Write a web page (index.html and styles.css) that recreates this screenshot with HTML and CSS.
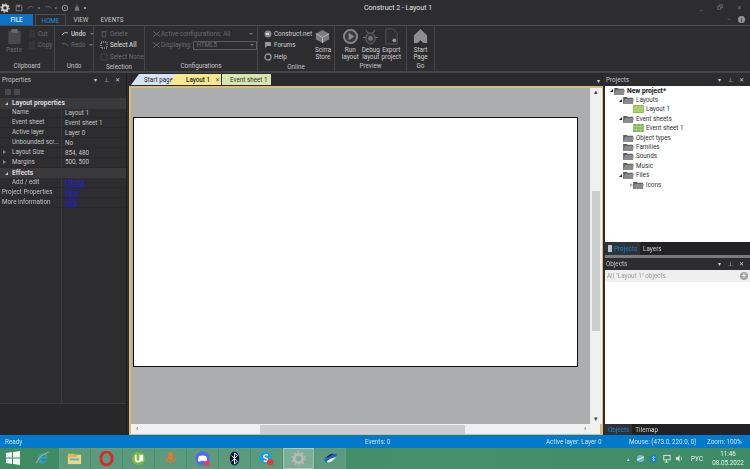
FILE: index.html
```html
<!DOCTYPE html>
<html lang="en">
<head>
<meta charset="utf-8">
<title>Construct 2 - Layout 1</title>
<link rel="stylesheet" href="styles.css">
</head>
<body>
<div class="app">
  <header class="titlebar">
    <div class="qat">
      <svg class="gear" viewBox="0 0 12 12"><circle cx="6" cy="6" r="3.2" fill="none" stroke="#cfcfcf" stroke-width="2.4"/><circle cx="6" cy="6" r="5" fill="none" stroke="#cfcfcf" stroke-width="1.4" stroke-dasharray="1.6 2.3"/></svg>
      <svg class="qi" viewBox="0 0 10 10"><path d="M1.5 1.5h6l1 1v6h-7z" fill="none" stroke="#8a8a8a"/><rect x="3" y="1.5" width="3" height="2.5" fill="#8a8a8a"/></svg>
      <svg class="qi" viewBox="0 0 10 10"><path d="M1 6c1-3 4-3.500 7-2" fill="none" stroke="#666" stroke-width="1.200"/></svg>
      <span class="qdot"></span>
      <svg class="qi" viewBox="0 0 10 10"><path d="M9 6C8 3 5 2.500 2 4" fill="none" stroke="#666" stroke-width="1.200"/></svg>
      <span class="qdot"></span>
      <svg class="qi" viewBox="0 0 10 10"><circle cx="5" cy="5" r="3.500" fill="none" stroke="#999" stroke-width="1.200"/><path d="M4 3.500l3 1.500-3 1.500z" fill="#777"/></svg>
      <svg class="qi" viewBox="0 0 10 10"><path d="M3 3.500h4l1 5H2z" fill="#777"/><path d="M5 1v3" stroke="#999"/></svg>
      <span class="qdot light"></span>
    </div>
    <div class="wintitle">Construct 2 - Layout 1</div>
    <div class="winbtns">
      <span class="wb">_</span>
      <svg class="wbi" viewBox="0 0 8 8"><path d="M1 3h4v4H1zM3 3V1h4v4H5" fill="none" stroke="#777"/></svg>
      <span class="wb">✕</span>
    </div>
  </header>
  <nav class="tabstrip">
    <span class="rtab file">FILE</span>
    <span class="rtab active">HOME</span>
    <span class="rtab rview">VIEW</span>
    <span class="rtab revents">EVENTS</span>
    <span class="spacer"></span>
    <span class="help-arrow">⌄</span>
    <span class="help-i">i</span>
  </nav>
  <section class="ribbon">
    <div class="group g-clip">
      <div class="gbody">
        <div class="big dim">
          <svg viewBox="0 0 16 18"><rect x="1.500" y="3" width="13" height="14" rx="1" fill="#4a4a4c"/><rect x="4.500" y="1" width="7" height="4" rx="1" fill="#6a6a6c"/></svg>
          <span>Paste</span>
        </div>
        <div class="col">
          <div class="ri dim"><i class="sq"></i>Cut</div>
          <div class="ri dim"><i class="sq"></i>Copy</div>
        </div>
      </div>
      <div class="glabel">Clipboard</div>
    </div>
    <div class="group g-undo">
      <div class="gbody">
        <div class="col">
          <div class="ri strong"><svg class="ic" viewBox="0 0 8 8"><path d="M1 5c1-2 3-3 6-2" fill="none" stroke="#bbb"/></svg>Undo<i class="caret"></i></div>
          <div class="ri dim"><svg class="ic" viewBox="0 0 8 8"><path d="M7 5C6 3 4 2 1 3" fill="none" stroke="#666"/></svg>Redo<i class="caret"></i></div>
        </div>
      </div>
      <div class="glabel">Undo</div>
    </div>
    <div class="group g-sel">
      <div class="gbody">
        <div class="col">
          <div class="ri dim"><svg class="ic" viewBox="0 0 8 8"><path d="M2 2h4l-.5 5h-3zM1.500 1.500h5" fill="none" stroke="#555"/></svg>Delete</div>
          <div class="ri strong"><svg class="ic" viewBox="0 0 8 8"><path d="M1 1h6v6H1z" fill="none" stroke="#ccc" stroke-dasharray="1 1"/></svg>Select All</div>
          <div class="ri dim"><svg class="ic" viewBox="0 0 8 8"><path d="M1 1h6v6H1z" fill="none" stroke="#444"/></svg>Select None</div>
        </div>
      </div>
      <div class="glabel">Selection</div>
    </div>
    <div class="group g-conf">
      <div class="gbody">
        <div class="col">
          <div class="ri dim"><svg class="ic wide" viewBox="0 0 10 8"><path d="M1 1l8 6M9 1L1 7" stroke="#666"/></svg>Active configurations: All<i class="caret push"></i></div>
          <div class="ri dim"><svg class="ic wide" viewBox="0 0 10 8"><path d="M1 1l8 6M9 1L1 7" stroke="#666"/></svg>Displaying:<span class="combo">HTML5<i class="caret"></i></span></div>
        </div>
      </div>
      <div class="glabel">Configurations</div>
    </div>
    <div class="group g-online">
      <div class="gbody">
        <div class="col">
          <div class="ri on"><svg class="ic" viewBox="0 0 8 8"><circle cx="4" cy="4" r="3.500" fill="#888"/><path d="M2 3h3v2H2z" fill="#ddd"/></svg>Construct.net</div>
          <div class="ri on"><svg class="ic" viewBox="0 0 8 8"><path d="M1 1h6v4H3L1 7z" fill="#999"/></svg>Forums</div>
          <div class="ri on"><svg class="ic" viewBox="0 0 8 8"><circle cx="4" cy="4" r="3" fill="none" stroke="#999" stroke-width="1.300"/></svg>Help</div>
        </div>
        <div class="big store">
          <svg viewBox="0 0 18 18"><path d="M2 6l7-4 7 4v6l-7 4-7-4z" fill="#7d7d7f"/><path d="M2 6l7 4 7-4M9 10v6" fill="none" stroke="#bbb"/></svg>
          <span>Scirra<br>Store</span>
        </div>
      </div>
      <div class="glabel">Online</div>
    </div>
    <div class="group g-prev">
      <div class="gbody spread">
        <div class="big">
          <svg viewBox="0 0 18 18"><circle cx="9" cy="9" r="7" fill="#3c3c3e" stroke="#888" stroke-width="2"/><path d="M7 5l6 4-6 4z" fill="#8d8d8f"/></svg>
          <span>Run<br>layout</span>
        </div>
        <div class="big">
          <svg viewBox="0 0 18 18"><ellipse cx="9" cy="11" rx="5" ry="6" fill="#3a3a3c" stroke="#666"/><circle cx="9" cy="11" r="2.500" fill="#777"/><path d="M4 2l3 4M14 2l-3 4M1 10h3M14 10h3" stroke="#777"/></svg>
          <span>Debug<br>layout</span>
        </div>
        <div class="big">
          <svg viewBox="0 0 18 18"><path d="M3 1h8l4 4v12H3z" fill="#2f2f31" stroke="#555"/><circle cx="12" cy="13" r="2" fill="#999"/></svg>
          <span>Export<br>project</span>
        </div>
      </div>
      <div class="glabel">Preview</div>
    </div>
    <div class="group g-go">
      <div class="gbody">
        <div class="big">
          <svg viewBox="0 0 18 18"><path d="M9 1l7 7v8h-4l-3-3-3 3H2V8z" fill="#8e8e90"/></svg>
          <span>Start<br>Page</span>
        </div>
      </div>
      <div class="glabel">Go</div>
    </div>
  </section>

  <main class="work">
    <aside class="left">
      <div class="phead"><span>Properties</span><span class="pctl">▾ <b>⊥</b> ✕</span></div>
      <div class="ptools"><i></i><i></i></div>
      <div class="props">
        <div class="cat"><i class="tri-open"></i>Layout properties</div>
        <div class="row"><span class="k">Name</span><span class="v">Layout 1</span></div>
        <div class="row"><span class="k">Event sheet</span><span class="v">Event sheet 1</span></div>
        <div class="row"><span class="k">Active layer</span><span class="v">Layer 0</span></div>
        <div class="row"><span class="k">Unbounded scr...</span><span class="v">No</span></div>
        <div class="row"><span class="k exp">Layout Size</span><span class="v">854, 480</span></div>
        <div class="row"><span class="k exp">Margins</span><span class="v">500, 500</span></div>
        <div class="cat"><i class="tri-open"></i>Effects</div>
        <div class="row"><span class="k">Add / edit</span><span class="v link">Effects</span></div>
        <div class="row top"><span class="k">Project Properties</span><span class="v link">View</span></div>
        <div class="row top"><span class="k">More information</span><span class="v link">Help</span></div>
        <div class="pfill"><span></span></div>
      </div>
      <div class="phelp"></div>
    </aside>

    <section class="center">
      <div class="doctabs">
        <span class="dt dstart">Start page</span>
        <span class="dt layout">Layout 1<em>✕</em></span>
        <span class="dt sheet">Event sheet 1</span>
        <span class="spacer"></span>
        <span class="dtarrow">▾</span>
      </div>
      <div class="docframe">
        <div class="viewrow">
          <div class="viewport"><div class="canvas"></div></div>
          <div class="vscroll"><span class="arrow">▴</span><span class="vtrack"><span class="vthumb"></span></span><span class="arrow">▾</span></div>
        </div>
        <div class="hscroll"><span class="arrow">‹</span><span class="htrack"><span class="hthumb"></span></span><span class="arrow">›</span></div>
      </div>
    </section>

    <aside class="right">
      <div class="phead"><span>Projects</span><span class="pctl">▾ <b>⊥</b> ✕</span></div>
      <div class="tree">
        <div class="ti bold l0"><i class="tri-open dark"></i><svg class="folder" viewBox="0 0 12 9"><use href="#fld"/></svg>New project*</div>
        <div class="ti l1"><i class="tri-open dark"></i><svg class="folder" viewBox="0 0 12 9"><use href="#fld"/></svg>Layouts</div>
        <div class="ti l2"><svg class="leaf" viewBox="0 0 12 9"><rect width="12" height="9" fill="#8dbb4c"/><rect x="1" y="1" width="10" height="7" fill="#a9cf6a"/></svg>Layout 1</div>
        <div class="ti l1"><i class="tri-open dark"></i><svg class="folder" viewBox="0 0 12 9"><use href="#fld"/></svg>Event sheets</div>
        <div class="ti l2"><svg class="leaf" viewBox="0 0 12 9"><rect width="12" height="9" fill="#7fb257"/><path d="M4 0v9M8 0v9M0 3h12M0 6h12" stroke="#c8e0a4" stroke-width=".7"/></svg>Event sheet 1</div>
        <div class="ti l1 nt"><svg class="folder" viewBox="0 0 12 9"><use href="#fld"/></svg>Object types</div>
        <div class="ti l1 nt"><svg class="folder" viewBox="0 0 12 9"><use href="#fld"/></svg>Families</div>
        <div class="ti l1 nt"><svg class="folder" viewBox="0 0 12 9"><use href="#fld"/></svg>Sounds</div>
        <div class="ti l1 nt"><svg class="folder" viewBox="0 0 12 9"><use href="#fld"/></svg>Music</div>
        <div class="ti l1"><i class="tri-open dark"></i><svg class="folder" viewBox="0 0 12 9"><use href="#fld"/></svg>Files</div>
        <div class="ti l3"><i class="tri-closed"></i><svg class="folder" viewBox="0 0 12 9"><use href="#fld"/></svg>Icons</div>
      </div>
      <div class="btabs">
        <span class="bt on"><i class="bticon"></i>Projects</span><span class="bt">Layers</span>
      </div>
      <div class="rsplit"></div>
      <div class="phead obj"><span>Objects</span><span class="pctl">▾ <b>⊥</b> ✕</span></div>
      <div class="objbar"><span>All "Layout 1" objects</span><i class="plus">+</i></div>
      <div class="objlist"></div>
      <div class="btabs last">
        <span class="bt on">Objects</span><span class="bt">Tilemap</span>
      </div>
    </aside>
  </main>

  <footer class="status">
    <span class="s1">Ready</span>
    <span class="s2">Events: 0</span>
    <span class="s3">Active layer: Layer 0</span>
    <span class="s4">Mouse: (473.0, 220.0, 0)</span>
    <span class="s5">Zoom: 100%</span>
  </footer>

  <div class="taskbar">
    <svg class="winlogo" viewBox="0 0 14 14"><path d="M0 2l6-.9V6.500H0zM7 1l7-1v6.500H7zM0 7.500h6v5.400l-6-.9zM7 7.500h7V14l-7-1z" fill="#f2f6f3"/></svg>
    <span class="tbtn plain"><svg viewBox="0 0 16 16"><path d="M3 9.500C3 5 6 2.500 9 2.500s4.500 2.500 4.500 5.500H6c0 3.500 4.500 4 7 2-1.500 4-9 5-10-.5zM6.200 6.300h4.800C10.500 4 7 4 6.200 6.300z" fill="#2f9fd8"/><path d="M2 13C1 10 8 3 14.500 1.500" fill="none" stroke="#e8b63a" stroke-width="1"/></svg></span>
    <span class="tbtn"><svg viewBox="0 0 16 16"><path d="M1 4h14v10H1z" fill="#f3d680"/><path d="M1 3h6l1 1h3v3H1z" fill="#e2b94f"/><rect x="3" y="8" width="10" height="2" fill="#5ab0e0"/></svg></span>
    <span class="tbtn"><svg viewBox="0 0 16 16"><ellipse cx="8" cy="8" rx="6" ry="7" fill="none" stroke="#e0232e" stroke-width="3"/></svg></span>
    <span class="tbtn"><svg viewBox="0 0 16 16"><circle cx="8" cy="8" r="7" fill="#7cba3a"/><path d="M5 4v5c0 3 5 3 5 0V4M12 4v7" fill="none" stroke="#fff" stroke-width="2"/></svg></span>
    <span class="tbtn"><svg viewBox="0 0 16 16"><rect x="5.500" y="1" width="5" height="9" rx="2.500" fill="#e8743b"/><path d="M3 7c0 6 10 6 10 0M8 12v3" fill="none" stroke="#e8743b" stroke-width="1.300"/></svg></span>
    <span class="tbtn"><svg viewBox="0 0 16 16"><circle cx="8" cy="8" r="7.500" fill="#5865f2"/><path d="M4 5.500c2-1 6-1 8 0l1 5c-1 1-2 1-2.500 1L10 10.500H6l-.500 1c-.5 0-1.500 0-2.500-1z" fill="#fff"/><circle cx="13" cy="13" r="3" fill="#e8404a"/></svg></span>
    <span class="tbtn"><svg viewBox="0 0 16 16"><ellipse cx="8" cy="8" rx="5" ry="7.500" fill="#101848"/><path d="M5 5l6 6-3 3V2l3 3-6 6" fill="none" stroke="#fff"/></svg></span>
    <span class="tbtn"><svg viewBox="0 0 16 16"><circle cx="7" cy="7" r="6.500" fill="#1e9be0"/><path d="M9.500 4.500C8 3.500 5 4 5 6c0 2 4.500 1.500 4.500 3.500 0 1.500-3 2-4.500 1" fill="none" stroke="#fff" stroke-width="1.500"/><circle cx="12" cy="12" r="3.500" fill="#e23b3b"/></svg></span>
    <span class="tbtn current"><svg viewBox="0 0 16 16"><circle cx="8" cy="8" r="4.500" fill="none" stroke="#b8b9b1" stroke-width="3"/><circle cx="8" cy="8" r="6.800" fill="none" stroke="#b8b9b1" stroke-width="2" stroke-dasharray="2 2.300"/></svg></span>
    <span class="tbtn"><svg viewBox="0 0 16 16"><path d="M1 10c2-5 8-7 14-7-1 5-6 9-11 9z" fill="#1c5fd0"/><path d="M4 11c3-3 6-3.500 10-5-2 3-5 6-9 6z" fill="#eef5fb"/><path d="M4 6l5-3 2 0-6 4z" fill="#111"/></svg></span>
    <span class="spacer"></span>
    <div class="tray">
      <span class="trayup">▴</span>
      <svg class="tric" viewBox="0 0 10 10"><circle cx="5" cy="5" r="4" fill="#7fb6dc"/><path d="M1 7l8-4" stroke="#fff"/></svg>
      <svg class="tric" viewBox="0 0 10 10"><ellipse cx="5" cy="5" rx="3.200" ry="4.800" fill="#1274d8"/><path d="M3.500 3.500l3 3-1.500 1.500V2l1.500 1.500-3 3" fill="none" stroke="#dff" stroke-width=".6"/></svg>
      <svg class="tric" viewBox="0 0 10 10"><rect x="2" y="1.500" width="7" height="5" fill="none" stroke="#e8efe9"/><path d="M5 7v2M3 9h4" stroke="#e8efe9"/></svg>
      <svg class="tric" viewBox="0 0 10 10"><path d="M1 3.500h2l2-2v7l-2-2H1z" fill="#e8efe9"/><path d="M6.500 3c1 1 1 3 0 4" fill="none" stroke="#e8efe9" stroke-width=".8"/></svg>
      <span class="lang">РУС</span>
      <span class="clock">11:46<br>08.05.2022</span>
    </div>
  </div>
</div>
<svg class="defs" aria-hidden="true"><defs><g id="fld"><path d="M0 1h4l1 1h6v7H0z" fill="#5a5a5c"/><path d="M2 3h10l-1 6H0z" fill="#8b8b8d"/></g></defs></svg>
</body>
</html>
```

FILE: styles.css
```css
* { box-sizing: border-box; }
html, body { margin: 0; padding: 0; width: 750px; height: 469px; overflow: hidden; }
body { font-family: Roboto, "Noto Sans", sans-serif; font-size: 6.300px; color: #d6d6d6; background: #2d2d30; }
.defs { display: none; }
.spacer { flex: 1; }
.app { display: flex; flex-direction: column; width: 750px; height: 469px; filter: blur(.3px); }

.titlebar { height: 14px; display: flex; align-items: center; background: #2d2d30; padding-right: 2px; }
.qat { display: flex; align-items: center; width: 364px; padding-top: 1px; }
.qi { width: 8px; height: 8px; margin-left: 4px; }
.gear { width: 10px; height: 10px; margin-right: 1px; }
.qdot { width: 2px; height: 2px; margin-left: 3px; background: #666; }
.qdot.light { background: #999; margin-left: 3px; }
.wintitle { font-size: 7px; color: #e2e2e2; padding-top: 1px; }
.winbtns { margin-left: auto; display: flex; align-items: center; gap: 13px; color: #777; font-size: 6px; padding-right: 6px; }
.wb { width: 6px; text-align: center; }
.wbi { width: 6px; height: 6px; }

.tabstrip { height: 11px; display: flex; align-items: stretch; background: #2d2d30; }
.rtab { display: flex; align-items: center; justify-content: center; font-size: 6.300px; color: #c8c8c8; }
.rtab.file { width: 33px; background: #0a72c8; color: #e6f0fa; font-weight: 500; }
.rtab.active { width: 31px; margin-left: 2px; color: #1593e0; border: 1px solid #4c4c4e; border-bottom: 0; background: #2d2d30; height: 12px; }
.rtab.rview { width: 30px; }
.rtab.revents { width: 32px; }
.help-arrow { color: #666; font-size: 7px; margin-right: 6px; line-height: 9px; }
.help-i { width: 7px; height: 7px; margin: 2px 5px 0 0; border-radius: 50%; background: #9a9a9a; color: #2d2d30; font-size: 6px; line-height: 7px; text-align: center; font-weight: 700; }

.ribbon { height: 48px; display: flex; background: #2d2d30; border-top: 1px solid #4c4c4e; border-bottom: 2px solid #454547; }
.group { display: flex; flex-direction: column; border-right: 1px solid #454547; }
.g-clip { width: 55px; }
.g-undo { width: 39px; }
.g-sel { width: 51px; }
.g-conf { width: 113px; }
.g-online { width: 77px; }
.g-prev { width: 72px; }
.g-go { width: 28px; }
.gbody { flex: 1; display: flex; padding-top: 2px; }
.gbody.spread { padding-left: 5px; }
.glabel { height: 9px; line-height: 8px; text-align: center; color: #c4c4c4; }
.col { display: flex; flex-direction: column; flex: 1; padding-left: 6px; }
.g-clip .col { padding-left: 3px; }
.g-conf .col { padding-left: 7px; }
.ri { height: 11.500px; display: flex; align-items: center; white-space: nowrap; }
.ri.dim { color: #6b6b6d; }
.ri.strong { color: #cfcfcf; font-weight: 500; }
.ri.on { color: #cfcfcf; }
.ic { width: 8px; height: 8px; margin-right: 2px; flex: none; }
.ic.wide { width: 9px; margin-right: 0; }
.sq { width: 6px; height: 8px; margin-right: 3px; background: #353537; display: block; }
.caret { width: 0; height: 0; border: 2px solid transparent; border-top-color: #777; border-bottom: 0; margin-left: 4px; display: block; }
.caret.push { margin-left: auto; margin-right: 4px; }
.combo { display: flex; align-items: center; justify-content: space-between; width: 64px; height: 9px; margin-left: 2px; padding: 0 2px; border: 1px solid #5a5a5c; color: #6f6f71; }
.big { display: flex; flex-direction: column; align-items: center; text-align: center; line-height: 6.700px; color: #cfcfcf; width: 20.500px; }
.big svg { width: 17px; height: 17px; margin-bottom: 2px; flex: none; }
.big.dim { width: 24px; margin-left: 2px; color: #6b6b6d; }
.big.store { width: 24px; }
.g-go .big { width: 100%; }

.work { flex: 1; display: flex; min-height: 0; }
.left { width: 127px; display: flex; flex-direction: column; background: #2d2d30; border-right: 1px solid #1f1f21; }
.phead { height: 13px; display: flex; align-items: center; justify-content: space-between; padding: 0 4px 0 2px; color: #c2c2c2; background: #2d2d30; flex: none; }
.pctl { font-size: 5.500px; color: #c8c8c8; letter-spacing: 2px; word-spacing: 1px; }
.pctl b { font-weight: 400; }
.ptools { height: 12px; display: flex; gap: 3px; align-items: center; padding-left: 5px; flex: none; }
.ptools i { width: 6px; height: 6px; background: #4a4a4c; display: block; }
.props { flex: 1; display: flex; flex-direction: column; }
.cat { height: 10.500px; display: flex; align-items: center; padding-left: 5px; font-size: 6.700px; font-weight: 700; color: #dcdcdc; background: #3a3a3c; }
.tri-open { width: 0; height: 0; display: block; margin-right: 4px; border-left: 3px solid transparent; border-bottom: 3px solid #c8c8c8; }
.tri-open.dark { border-bottom-color: #222; margin-right: 1px; }
.tri-closed { width: 0; height: 0; display: block; border: 2.500px solid transparent; border-left: 3px solid #aaa; border-right: 0; }
.row { height: 9.900px; display: flex; align-items: center; border-bottom: 1px solid #29292b; color: #c4c4c4; }
.k { width: 62px; padding-left: 12px; border-right: 1px solid #3a3a3c; white-space: nowrap; overflow: hidden; position: relative; line-height: 9px; }
.k.exp::before { content: ""; position: absolute; left: 3px; top: 2px; border: 2.500px solid transparent; border-left: 3px solid #888; border-right: 0; }
.row.top .k { padding-left: 2px; }
.v { padding-left: 3px; }
.link { color: #1c1ce0; text-decoration: underline; font-weight: 500; }
.pfill { flex: 1; }
.pfill span { display: block; width: 62px; height: 100%; border-right: 1px solid #3a3a3c; }
.phelp { height: 32px; background: #28282a; border-top: 1px solid #3a3a3c; flex: none; }

.center { width: 476px; display: flex; flex-direction: column; background: #2d2d30; padding-left: 2px; }
.doctabs { height: 13px; display: flex; align-items: flex-end; flex: none; background: #2a2a2c; }
.dt { height: 11px; display: flex; align-items: center; color: #2a2a2a; margin-bottom: 1px; }
.dt.dstart { width: 45px; margin-left: 2px; padding-left: 13px; background: #d6e2f6; clip-path: polygon(0 100%, 8px 0, 100% 0, 100% 100%); }
.dt.layout { width: 52px; margin-left: -7px; padding-left: 17px; background: #f7e78d; clip-path: polygon(0 100%, 7px 0, 100% 0, 100% 100%); font-weight: 500; }
.dt.layout em { font-style: normal; margin-left: auto; padding-right: 1px; font-size: 6px; font-weight: 400; color: #555; }
.dt.sheet { width: 49px; margin-left: 1px; padding-left: 8px; background: #d8e5b0; color: #333; }
.dtarrow { font-size: 6px; color: #d0d0d0; margin: 0 3px 2px 0; }
.docframe { flex: 1; display: flex; flex-direction: column; min-height: 0; border: 2px solid #d9bd75; border-right-width: 3px; border-bottom-width: 1px; background: #abadaf; }
.viewrow { flex: 1; display: flex; min-height: 0; }
.viewport { flex: 1; padding: 30px 12px 0 2px; }
.canvas { width: 445px; height: 250px; margin-top: -1px; background: #fff; border: 1px solid #111; }
.vscroll { width: 12px; display: flex; flex-direction: column; background: #f0f0f0; }
.hscroll { height: 10px; display: flex; align-items: center; background: #f0f0f0; flex: none; padding-right: 9px; }
.arrow { color: #444; font-size: 7px; line-height: 9px; width: 12px; height: 9px; text-align: center; flex: none; }
.vtrack { flex: 1; display: flex; flex-direction: column; justify-content: flex-end; padding: 0 2px 84px; }
.vthumb { height: 140px; background: #cdcdcd; }
.htrack { flex: 1; padding: 0 114px 0 117px; }
.hthumb { display: block; height: 9px; background: #cdcdcd; }

.right { flex: 1; display: flex; flex-direction: column; background: #2d2d30; padding-left: 2px; min-width: 0; }
.right > .phead { margin-left: -1px; }
.tree { height: 156px; background: #fff; color: #222; flex: none; }
.ti { height: 9.400px; display: flex; align-items: center; white-space: nowrap; color: #333; }
.ti.bold { font-size: 6.700px; font-weight: 700; color: #111; }
.l0 { padding-left: 5px; }
.l1 { padding-left: 14px; }
.l1.nt { padding-left: 18px; }
.l2 { padding-left: 28px; }
.l3 { padding-left: 25px; }
.folder { width: 11px; height: 8px; margin-right: 2px; flex: none; }
.leaf { width: 11px; height: 8px; margin-right: 2px; flex: none; }
.btabs { height: 13px; display: flex; align-items: center; background: #222224; flex: none; color: #d0d0d0; }
.btabs.last { height: 11px; }
.bt { display: flex; align-items: center; height: 100%; padding: 0 3px; }
.bt.on { color: #1786cf; background: #2f3338; }
.bticon { width: 4px; height: 7px; background: #b9c6d2; display: block; margin-right: 2px; }
.rsplit { height: 3px; background: #7b7b7d; flex: none; }
.phead.obj { height: 12px; }
.objbar { height: 12px; display: flex; align-items: center; justify-content: space-between; padding: 0 2px; background: #efefef; color: #9a9a9a; flex: none; }
.plus { width: 8px; height: 8px; border-radius: 50%; background: #a2a2a2; color: #fff; text-align: center; font-style: normal; line-height: 8px; font-weight: 700; }
.objlist { flex: 1; background: #fff; }

.status { height: 13px; display: flex; align-items: center; background: #007acc; color: #cde6f7; flex: none; }
.s1 { margin-left: 5px; width: 360px; }
.s2 { width: 181px; }
.s3 { width: 83px; }
.s4 { width: 78px; }
.s5 { white-space: nowrap; }

.taskbar { height: 21px; display: flex; align-items: stretch; gap: 1px; background: linear-gradient(100deg, #3d8a63, #43906b 60%, #3f8b66); flex: none; }
.winlogo { width: 14px; height: 14px; margin: 3px 9px 0 6px; }
.tbtn { width: 31px; display: flex; align-items: center; justify-content: center; background: #5b9b7c; border: 1px solid #5f9f80; }
.tbtn.plain { background: transparent; border-color: transparent; margin-right: 4px; width: 24px; }
.tbtn.current { background: #7dae95; border-color: #a9cbb9; }
.tbtn svg { width: 15px; height: 15px; }
.tray { display: flex; align-items: center; color: #eef4f0; }
.trayup { font-size: 5px; margin-right: 6px; }
.tric { width: 9px; height: 9px; margin-right: 4px; }
.lang { margin: 0 6px 0 3px; }
.clock { width: 38px; margin-right: 3px; text-align: center; line-height: 9px; }
```
